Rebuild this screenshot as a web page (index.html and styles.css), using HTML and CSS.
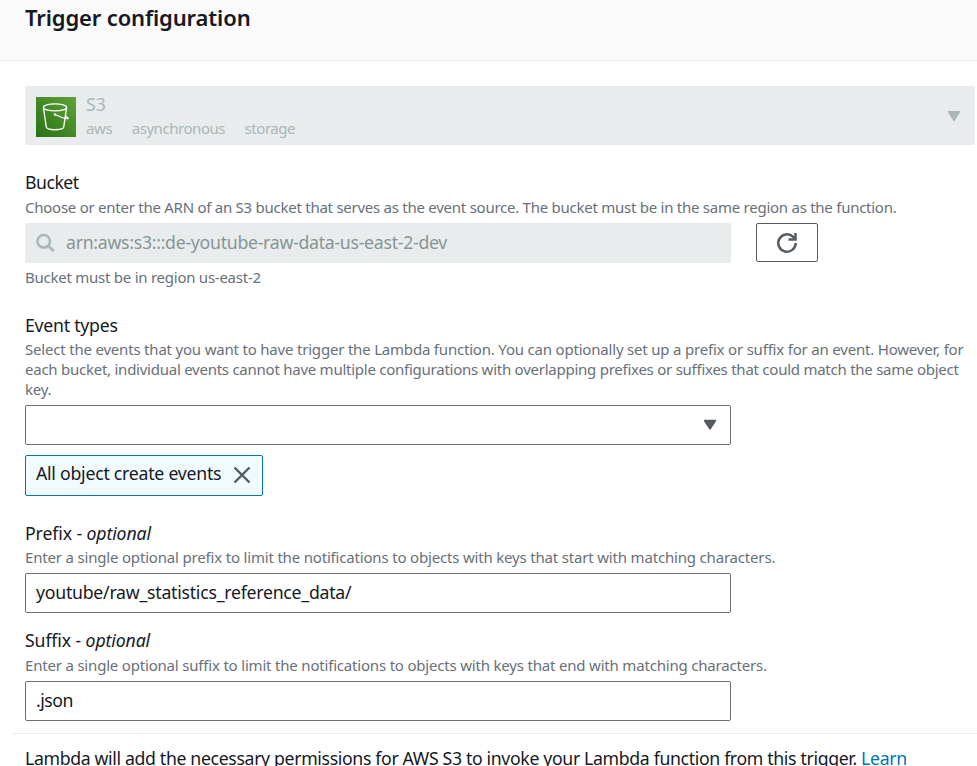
FILE: index.html
```
<!DOCTYPE html>
<html lang="en">
<head>
<meta charset="utf-8">
<title>Trigger configuration</title>
<link rel="stylesheet" href="styles.css">
</head>
<body>
<header class="header"><h1 class="title">Trigger configuration</h1></header>
<main class="content">
  <div class="service">
    <svg class="service-icon" width="40" height="40" viewBox="0 0 40 40" fill="none" stroke="#fff" stroke-width="1.3">
      <defs><linearGradient id="green" x1="0" y1="1" x2="1" y2="0"><stop offset="0" stop-color="#277116"/><stop offset="1" stop-color="#60a337"/></linearGradient></defs>
      <path d="M0 0h40v40H0z" fill="url(#green)" stroke="none"/>
      <ellipse cx="19" cy="10.4" rx="11.6" ry="3.5"/>
      <path d="M7.4 10.6l2.9 19.6c.4 3.4 17 3.4 17.4 0l2.9-19.6M19 17.5c4 2 8 3.5 11.700 4.100 2.300.3 2-.9-1.200-2.300"/>
      <circle cx="19" cy="17.500" r="1" fill="#fff" stroke-width=".6"/>
    </svg>
    <div class="service-text">
      <div class="service-name">S3</div>
      <div class="tags"><span class="tag-aws">aws</span><span class="tag-async">asynchronous</span><span class="tag-storage">storage</span></div>
    </div>
    <svg class="caret" width="13" height="11" viewBox="0 0 13 11"><path d="M1.500 .7h11l-5.500 9z" fill="#aab7b8" stroke="#aab7b8" stroke-width="1.400" stroke-linejoin="round"/></svg>
  </div>

  <section class="field bucket">
    <label class="label l-bucket">Bucket</label>
    <p class="desc d-bucket">Choose or enter the ARN of an S3 bucket that serves as the event source. The bucket must be in the same region as the function.</p>
    <div class="row">
      <div class="input disabled">
        <svg width="20" height="20" viewBox="0 0 20 20" fill="none" stroke="#aab7b8" stroke-width="2.500"><circle cx="7.700" cy="8.300" r="6.300"/><path d="M12.200 12.800l5.600 5.200" stroke-width="2.800"/></svg>
        <span class="v-arn">arn:aws:s3:::de-youtube-raw-data-us-east-2-dev</span>
      </div>
      <button class="refresh" aria-label="Refresh"><svg width="22" height="22" viewBox="0 0 22 22" fill="none" stroke="#545b64" stroke-width="2.500"><path d="M19.700 11a8.700 8.700 0 1 1-2.800-6.400l1.800 1.700M19.500 1v6.500h-7"/></svg></button>
    </div>
    <p class="desc d-hint">Bucket must be in region us-east-2</p>
  </section>

  <section class="field events">
    <label class="label l-events">Event types</label>
    <p class="desc multi"><span class="d-e1">Select the events that you want to have trigger the Lambda function. You can optionally set up a prefix or suffix for an event. However, for</span><br><span class="d-e2">each bucket, individual events cannot have multiple configurations with overlapping prefixes or suffixes that could match the same object</span><br><span class="d-e3">key.</span></p>
    <div class="input select"><svg width="15" height="12" viewBox="0 0 15 12"><path d="M1.500 1.500h11l-5.500 8.500z" fill="#545b64" stroke="#545b64" stroke-width="1.400" stroke-linejoin="round"/></svg></div>
    <div class="token"><span class="v-token">All object create events</span><svg width="18" height="18" viewBox="0 0 18 18" stroke="#545b64" stroke-width="2.400"><path d="M1.500 1.500l15 15M16.500 1.500l-15 15"/></svg></div>
  </section>

  <section class="field prefix">
    <label class="label l-optional">Prefix - <em>optional</em></label>
    <p class="desc d-prefix">Enter a single optional prefix to limit the notifications to objects with keys that start with matching characters.</p>
    <div class="input"><span class="v-prefix">youtube/raw_statistics_reference_data/</span></div>
  </section>

  <section class="field suffix">
    <label class="label l-optional">Suffix - <em>optional</em></label>
    <p class="desc d-suffix">Enter a single optional suffix to limit the notifications to objects with keys that end with matching characters.</p>
    <div class="input"><span class="v-json">.json</span></div>
  </section>
</main>
<footer class="footer"><p class="note">Lambda will add the necessary permissions for AWS S3 to invoke your Lambda function from this trigger. <a class="link">Learn</a></p></footer>
</body>
</html>
```
FILE: styles.css
```
* { box-sizing: border-box; }
html { overflow: hidden; }
body { margin: 0; height: 766px; overflow: hidden; background: #fff; color: #16191f; font: 17.7px/24px "Noto Sans", sans-serif; letter-spacing: -0.25px; white-space: nowrap; }
h1, p { margin: 0; }
.header { height: 61px; padding: 2px 25px; background: #fafafa; border-bottom: 1px solid #eaeded; }
.title { font-size: 22px; line-height: 30px; font-weight: 600; letter-spacing: -0.14px; }
.content { padding: 25px 2px 0 25px; }
.service { display: flex; height: 59px; padding: 11px 15px 0 11px; background: #e9ecec; border-radius: 2px; color: #aab7b8; }
.service-text { flex: 1; margin: -4px 0 0 10px; }
.service-name { height: 23px; line-height: 22px; letter-spacing: 0.1px; }
.tags { display: flex; gap: 19.5px; font-size: 15px; line-height: 24px; letter-spacing: -0.45px; }
.tag-aws { letter-spacing: -0.4px; }
.caret { margin-top: 14px; }
.field { display: flex; flex-direction: column; align-items: flex-start; }
.bucket { margin-top: 26px; }
.label { height: 24px; line-height: 22px; }
.l-bucket { letter-spacing: -0.5px; }
.l-optional { letter-spacing: -0.12px; }
.desc { position: relative; top: -1px; color: #687078; font-size: 15px; line-height: 20px; }
.row { display: flex; gap: 25px; margin-top: 5px; }
.input { display: flex; align-items: center; width: 706px; height: 40px; padding: 0 10px; border: 1px solid #687078; border-radius: 2px; background: #fff; }
.input span { padding-bottom: 2px; }
.disabled { gap: 10px; background: #e9ecec; border-color: #e9ecec; color: #879596; }
.v-arn { letter-spacing: -0.28px; }
.v-json { letter-spacing: -0.5px; }
.refresh { display: flex; align-items: center; justify-content: center; width: 62px; height: 39px; padding: 0; background: #fff; border: 1px solid #545b64; border-radius: 2px; }
.d-bucket { margin-top: 3px; letter-spacing: -0.256px; }
.d-hint { margin-top: 5px; }
.events { margin-top: 26px; }
.multi { margin-top: 2px; }
.d-e1 { letter-spacing: -0.195px; }
.select { margin-top: 5px; justify-content: flex-end; padding-right: 12px; }
.token { display: flex; justify-content: space-between; width: 238px; height: 41px; margin-top: 10px; padding: 5px 11px 0 10px; background: #f1faff; border: 1px solid #0073bb; border-radius: 2px; }
.token svg { margin-top: 5px; }
.prefix { margin-top: 26px; }
.d-prefix { margin-top: 2px; letter-spacing: -0.18px; }
.prefix .input, .suffix .input { margin-top: 5px; }
.suffix { margin-top: 16px; }
.d-suffix { margin-top: 3px; letter-spacing: -0.19px; }
.footer { margin: 12px 0 0 13px; padding: 12px 0 0 12px; border-top: 1px solid #eaeded; }
.note { letter-spacing: -0.35px; }
.link { color: #0073bb; }
```
